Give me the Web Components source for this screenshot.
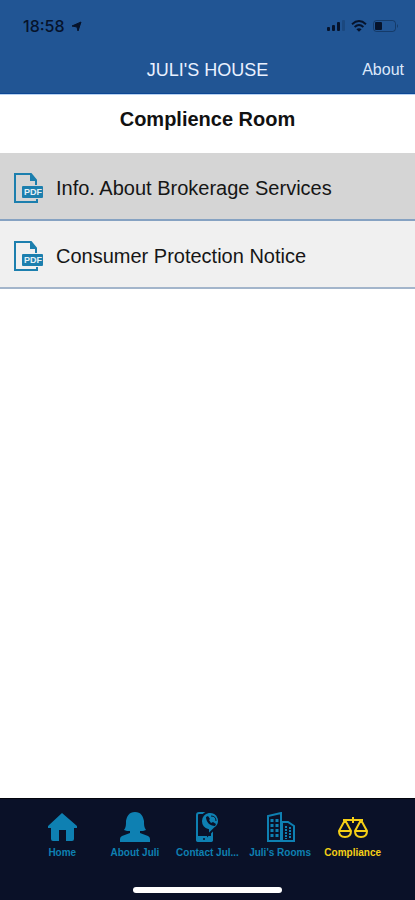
<!DOCTYPE html>
<html lang="en">
<head>
<meta charset="utf-8">
<meta name="viewport" content="width=device-width, initial-scale=1">
<title>Juli's House</title>
<style>
  body {
    margin: 0;
    background: #fff;
    font-family: "Liberation Sans", Arial, sans-serif;
  }
</style>
</head>
<body>
<juli-app></juli-app>

<template id="status-bar">
  <style>
    :host {
      display: flex;
      align-items: center;
      justify-content: space-between;
      padding: 0 16px 0 23px;
      height: 52px;
      color: #06132b;
    }
    .time {
      display: flex;
      align-items: center;
      gap: 6px;
      font: 500 16px Inter, "Liberation Sans", sans-serif;
    }
    .signals {
      display: flex;
      align-items: center;
      gap: 6px;
    }
    svg { display: block; fill: currentColor; }
  </style>
  <div class="time">
    <span>18:58</span>
    <svg width="11" height="11" viewBox="0 0 11 11"><path d="M10 1 7 10 6 6 1 5z" stroke="currentColor"/></svg>
  </div>
  <div class="signals">
    <svg width="18" height="12" viewBox="0 0 18 12">
      <rect x="0" y="7" width="3" height="4" rx="1"/>
      <rect x="5" y="5" width="3" height="6" rx="1"/>
      <rect x="10" y="2" width="3" height="9" rx="1"/>
      <rect x="15" y="0" width="3" height="11" rx="1" opacity=".2"/>
    </svg>
    <svg width="16" height="12" viewBox="0 0 16 12">
      <path d="M1 4.2Q8-2 15 4.2M3.6 7Q8 3.2 12.4 7" fill="none" stroke="currentColor" stroke-width="1.9"/>
      <path d="M5.4 9.2Q8 7.2 10.6 9.2L8 11.8z"/>
    </svg>
    <svg width="26" height="12" viewBox="0 0 26 12">
      <rect x=".5" y=".5" width="22" height="11" rx="3" fill="none" stroke="currentColor" opacity=".4"/>
      <rect x="2" y="2" width="7" height="8" rx="1"/>
      <path d="M24 4q2 2 0 4z" opacity=".4"/>
    </svg>
  </div>
</template>

<template id="nav-header">
  <style>
    :host {
      display: block;
      background: #215594;
      border-bottom: 1px solid #b9d3f2;
      color: #eaf1ff;
    }
    .bar {
      display: grid;
      grid-template-columns: 1fr auto 1fr;
      align-items: center;
      box-sizing: border-box;
      height: 42px;
      padding: 0 11px 6px;
      border-bottom: 1px solid #0d4794;
    }
    h1 {
      grid-column: 2;
      margin: 0;
      font-size: 18px;
      font-weight: normal;
      line-height: 20px;
    }
    a {
      justify-self: end;
      font-size: 16px;
      line-height: 20px;
      color: #dce8fb;
      text-decoration: none;
    }
  </style>
  <status-bar></status-bar>
  <div class="bar">
    <h1><slot></slot></h1>
    <a href="#about">About</a>
  </div>
</template>

<template id="pdf-row">
  <style>
    :host {
      display: block;
      background: #f0f0f0;
      border-bottom: 2px solid #a3b5cb;
    }
    :host([selected]) {
      background: #d5d5d5;
      border-bottom-color: #86a2c2;
    }
    a {
      display: flex;
      align-items: center;
      gap: 12px;
      height: 66px;
      padding: 4px 14px 0;
      box-sizing: border-box;
      font-size: 20px;
      color: #161616;
      text-decoration: none;
    }
    svg { display: block; flex: none; }
    text { font: bold 9px "Liberation Sans", sans-serif; }
  </style>
  <a href="#pdf">
    <svg width="30" height="30" viewBox="0 0 30 30">
      <path d="M22 12V7l-5-6H1v28h22v-3" fill="none" stroke="#1c7fae" stroke-width="2"/>
      <path d="M16 0v8h7z" fill="#1c7fae"/>
      <rect x="8" y="13" width="21" height="12" rx="1" fill="#1c7fae"/>
      <text x="19" y="22" text-anchor="middle" fill="#e4f1f7">PDF</text>
    </svg>
    <span><slot></slot></span>
  </a>
</template>

<template id="tab-item">
  <style>
    :host { display: block; flex: 1; min-width: 0; color: #0e80b2; }
    :host([active]) { color: #f5cf16; }
    a {
      display: flex;
      flex-direction: column;
      align-items: center;
      gap: 3px;
      color: inherit;
      font-size: 10px;
      font-weight: bold;
      line-height: 12px;
      white-space: nowrap;
      text-decoration: none;
    }
    svg { display: block; fill: currentColor; }
  </style>
  <a href="#tab">
    <svg width="32" height="32" viewBox="0 0 32 32"></svg>
    <span><slot></slot></span>
  </a>
</template>

<template id="tab-bar">
  <style>
    :host {
      display: block;
      background: #0a1128;
      border-top: 1px solid #02040c;
    }
    nav { display: flex; padding: 13px 26px 28px; }
    .indicator {
      width: 36%;
      height: 6px;
      margin: 0 auto;
      border-radius: 3px;
      background: #fff;
    }
    .foot { padding-bottom: 7px; }
  </style>
  <nav><slot></slot></nav>
  <div class="foot"><div class="indicator"></div></div>
</template>

<template id="juli-app">
  <style>
    :host { display: flex; flex-direction: column; min-height: 100vh; }
    main { flex: 1; }
    h2 {
      margin: 0;
      padding: 12px 0 22px;
      font-size: 20px;
      line-height: 24px;
      text-align: center;
      color: #111;
    }
  </style>
  <nav-header>JULI'S HOUSE</nav-header>
  <main>
    <h2>Complience Room</h2>
    <pdf-row selected>Info. About Brokerage Services</pdf-row>
    <pdf-row>Consumer Protection Notice</pdf-row>
  </main>
  <tab-bar>
    <tab-item icon="home">Home</tab-item>
    <tab-item icon="person">About Juli</tab-item>
    <tab-item icon="contact">Contact Jul...</tab-item>
    <tab-item icon="rooms">Juli's Rooms</tab-item>
    <tab-item icon="scales" active>Compliance</tab-item>
  </tab-bar>
</template>

<script>
  const icons = {
    home: '<path d="M16 1 31 14v2h-3v11q0 2-2 2h-6V18h-7v11H7q-2 0-2-2V16H2v-2z"/>',
    person: `<path d="M16 0c6 0 8 4 9 9 0 4 0 6 2 9-2 1-4 1-6 1v2l8 3q2 1 2 3v3H1v-3q0-2 2-3l8-3v-2c-2 0-4 0-6-1 2-3 2-5 2-9 1-5 3-9 9-9z"/>`,
    contact: `
      <rect x="6" y="1" width="15" height="28" rx="2" fill="none" stroke="currentColor" stroke-width="2"/>
      <path d="M5 24h17v4q0 2-2 2H7q-2 0-2-2z"/>
      <path d="M10 9a9 9 0 1 1 13 8l-6 6v-5a9 9 0 0 1-7-9z" stroke="#0a1128" stroke-width="2"/>
      <path d="M15 5c0 5 4 9 9 9l1-2-3-2-2 1-2-3 1-1-2-3z" fill="#0a1128"/>
      <path d="M20 4q5 0 5 5" fill="none" stroke="#0a1128"/>
      <circle cx="13" cy="27" r="1" fill="#0a1128"/>`,
    rooms: `
      <path d="M4 29V4l13-3v28zM18 10h6l6 4v15H18z" fill="none" stroke="currentColor" stroke-width="2"/>
      <path d="M8 7v19M13 7v19" fill="none" stroke="currentColor" stroke-width="3" stroke-dasharray="3 2"/>
      <path d="M22 14v13M26 15v12" fill="none" stroke="currentColor" stroke-width="2" stroke-dasharray="2 1"/>`,
    scales: `
      <path d="M16 5v6M6 8h20" fill="none" stroke="currentColor" stroke-width="2"/>
      <path d="M8 8 2 19q0 6 6 6t6-6zM24 8l-6 11q0 6 6 6t6-6z" fill="none" stroke="currentColor" stroke-width="2" stroke-linejoin="round"/>
      <path d="M3 18h10v2H3zM19 18h10v2H19z"/>`
  };

  class BaseElement extends HTMLElement {
    constructor() {
      super();
      const template = document.getElementById(this.localName);
      this.attachShadow({ mode: 'open' });
      this.shadowRoot.appendChild(template.content.cloneNode(true));
    }
  }

  class TabItem extends BaseElement {
    connectedCallback() {
      const icon = this.getAttribute('icon');
      this.shadowRoot.querySelector('svg').innerHTML = icons[icon];
      this.shadowRoot.querySelector('a').href = '#' + icon;
      if (this.hasAttribute('active')) {
        this.shadowRoot.querySelector('a').setAttribute('aria-current', 'page');
      }
    }
  }

  customElements.define('status-bar', class extends BaseElement {});
  customElements.define('nav-header', class extends BaseElement {});
  customElements.define('pdf-row', class extends BaseElement {});
  customElements.define('tab-item', TabItem);
  customElements.define('tab-bar', class extends BaseElement {});
  customElements.define('juli-app', class extends BaseElement {});
</script>
</body>
</html>
